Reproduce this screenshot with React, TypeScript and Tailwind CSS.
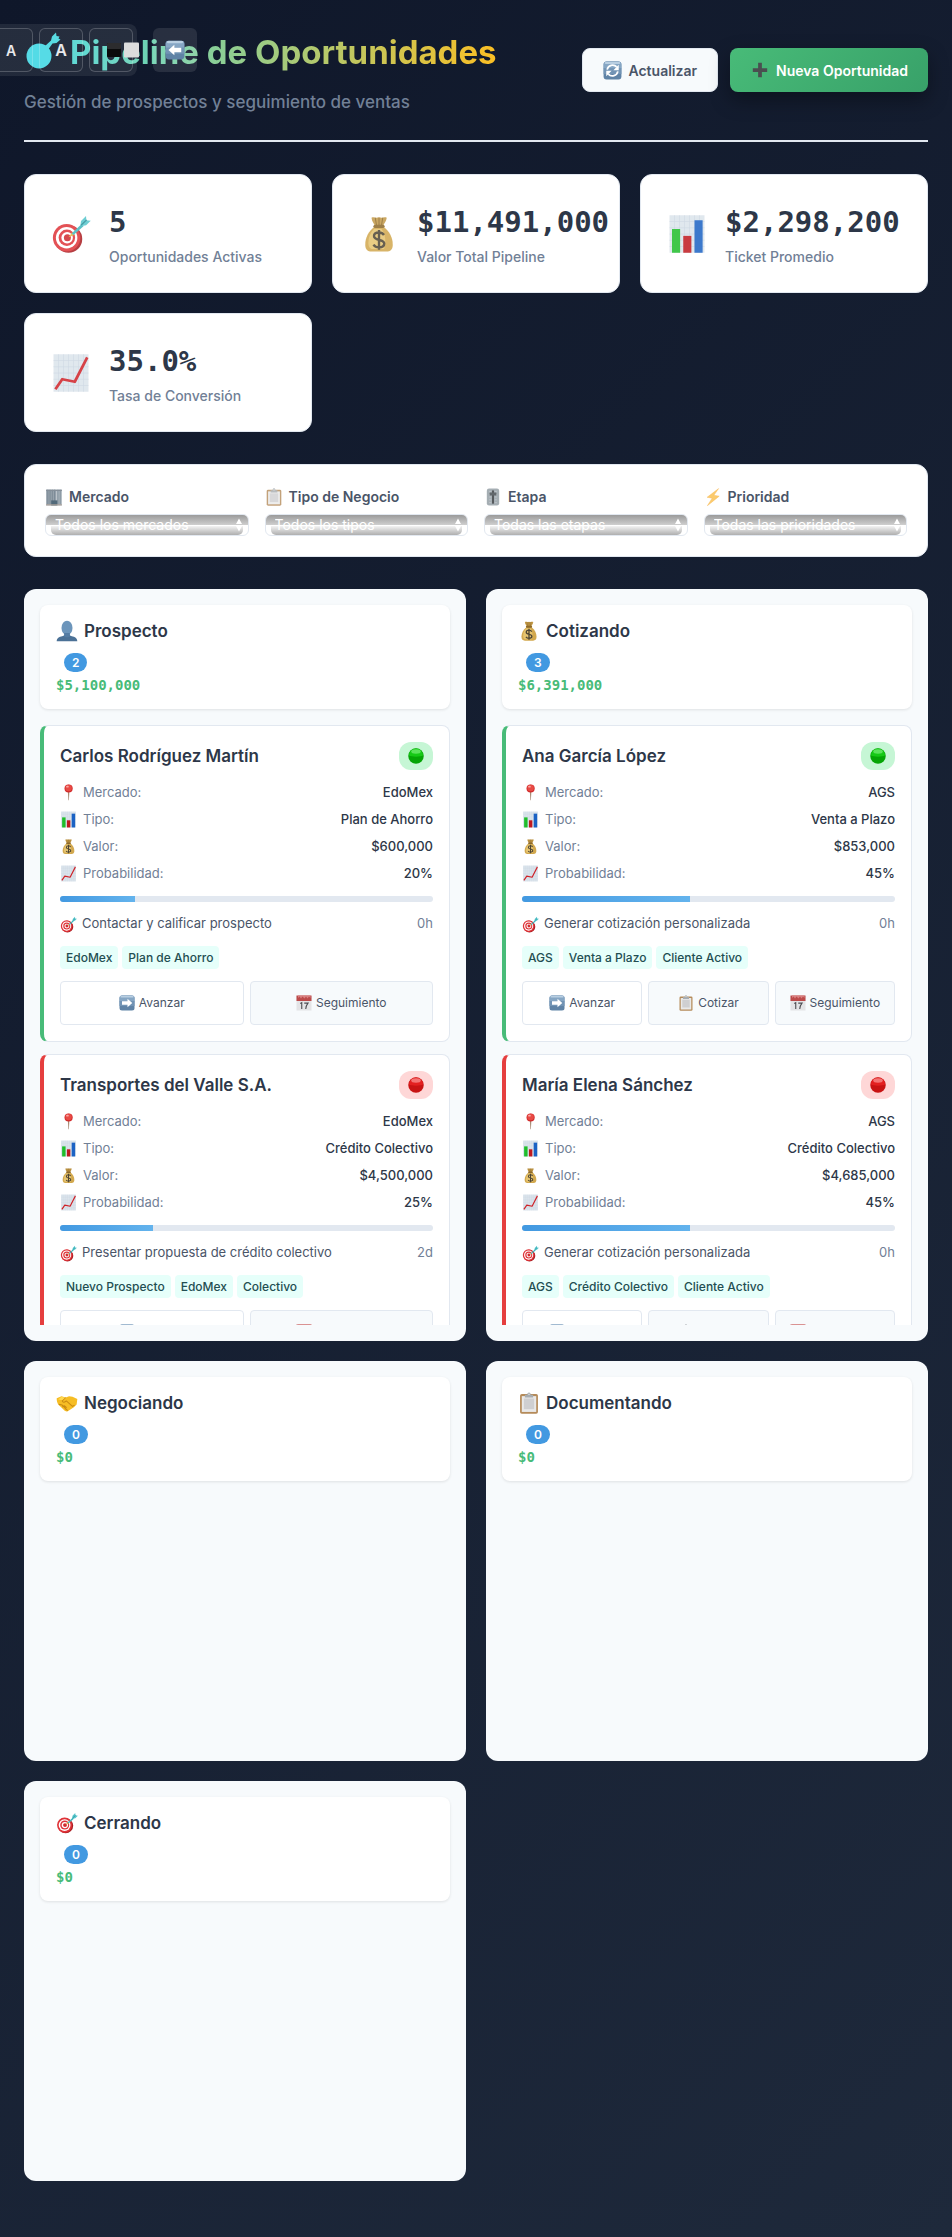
import React, { type ReactNode } from "react";

type IconName =
  | "target" | "bag" | "bars" | "trend" | "pin" | "building" | "clipboard" | "slider"
  | "bolt" | "person" | "handshake" | "right" | "left" | "calendar" | "refresh"
  | "green" | "red" | "plus";

const keycap = (
  <>
    <rect x="1" y="1" width="30" height="30" rx="5" fill="#5f83a6" />
    <rect x="1" y="1" width="30" height="15" rx="5" fill="#86a6c4" />
    <rect x="3" y="1.5" width="26" height="3.5" rx="1.7" fill="#b9cfe2" />
    <rect x="1" y="12" width="30" height="10" fill="#7294b5" />
  </>
);

const sheet = (
  <>
    <rect x="2" y="1" width="28" height="30" fill="#dbe4ec" />
    <path d="M6 1v30M10 1v30M14 1v30M18 1v30M22 1v30M26 1v30M2 6h28M2 11h28M2 16h28M2 21h28M2 26h28" stroke="#c9d4df" strokeWidth=".5" />
  </>
);

const ART: Record<IconName, ReactNode> = {
  target: (
    <>
      <circle cx="14" cy="20" r="11" fill="#a91d22" />
      <circle cx="12.5" cy="19" r="11" fill="#df3338" />
      <circle cx="12.5" cy="19" r="8.6" fill="#fff" />
      <circle cx="12.7" cy="19" r="6.6" fill="#df3338" />
      <circle cx="12.9" cy="19" r="4.6" fill="#fff" />
      <circle cx="13.1" cy="19" r="2.8" fill="#cf2a2f" />
      <path d="M14 18.5l3-4 2 2z" fill="#e8b33c" />
      <path d="M16.5 15.5l8-7.5 1.5 1.8-8 7z" fill="#3fb6bd" />
      <path d="M23.5 9.5l.5-4 4-4 .3 3.4 3.5.4-3.7 3.7-4 .7z" fill="#55c6cc" />
      <path d="M24 9l4.5-4.3" stroke="#268b95" strokeWidth="1" />
    </>
  ),
  bag: (
    <>
      <path d="M10 3c2-1 3 .6 6-.4 3 1 4-.6 6.200.4-.4 3-2 4.500-3 6.500h-6.400c-1-2-2.500-3.500-2.800-6.500z" fill="#c39a48" />
      <path d="M13 3l1 6M16 3v6M19 3l-1 6" stroke="#8d692a" strokeWidth=".8" />
      <path d="M12.500 10h7c5 4 7.500 9 7.500 14.500 0 4-2 5.500-5 5.500h-12c-3 0-5-1.500-5-5.500C5 19 7.500 14 12.500 10z" fill="#d2a84e" />
      <path d="M12 12c-3 3-4.500 7-4.500 11 0 3 1 5 3.500 5h9c2.500-8 0-13-2-16z" fill="#e6c46f" />
      <rect x="11.500" y="8.500" width="9" height="2.600" rx="1.300" fill="#8d692a" />
      <path d="M20 16.800c-1-1.500-2.400-2-4-2-2.300 0-4 1.100-4 2.900 0 4.200 8.200 2 8.200 6 0 1.900-1.700 3-4.200 3-1.900 0-3.500-.7-4.400-2.200M16 12.800v15.800" fill="none" stroke="#4d4433" strokeWidth="1.900" />
    </>
  ),
  bars: (
    <>
      {sheet}
      <rect x="4" y="12" width="6.500" height="19" fill="#1fbe2b" />
      <rect x="13" y="17.500" width="6.500" height="13.500" fill="#c01a1f" />
      <rect x="22" y="5" width="6.500" height="26" fill="#1b62c4" />
    </>
  ),
  trend: (
    <>
      {sheet}
      <path d="M3.500 29l5.500-8 10 2L29 3.500" fill="none" stroke="#cf2228" strokeWidth="2.200" strokeLinejoin="round" />
    </>
  ),
  pin: (
    <>
      <path d="M14.800 14h2.800l-.8 16.500h-1z" fill="#a98a74" />
      <circle cx="16.200" cy="8.500" r="7.700" fill="#d12a2a" />
      <circle cx="16.200" cy="7.500" r="6.200" fill="#e84a45" />
      <ellipse cx="14" cy="5" rx="2.600" ry="1.800" fill="#f8aaa5" />
    </>
  ),
  building: (
    <>
      <path d="M2 3h18v28H2z" fill="#7e8c98" />
      <path d="M20 3h10v28H20z" fill="#98a5af" />
      <path d="M5 3v26M9 3v26M13 3v26M17 3v26M23 3v26M27 3v26" stroke="#536777" strokeWidth="1.400" />
      <path d="M2 3h28v2.400H2z" fill="#677480" />
      <path d="M11 22h11v9H11z" fill="#28465a" />
      <path d="M2 29h28v2H2z" fill="#9b8c82" />
    </>
  ),
  clipboard: (
    <>
      <rect x="3" y="3" width="26" height="28.500" rx="2.500" fill="#b58b5a" />
      <rect x="5.500" y="6" width="21" height="23" fill="#e9e9e9" />
      <rect x="8.500" y="9.500" width="15" height="15.500" fill="#cfcfd1" />
      <path d="M10 4h3.500c0-4.500 5-4.500 5 0H22v4H10z" fill="#a7acb0" />
      <circle cx="16" cy="3.200" r="1.100" fill="#e9e9e9" />
    </>
  ),
  slider: (
    <>
      <rect x="5" y="1" width="22" height="30" rx="4" fill="#8f9aa1" />
      <path d="M9 6h4M9 11h4M9 16h4M9 21h4M9 26h4M19 6h4M19 11h4M19 16h4M19 21h4M19 26h4" stroke="#c4cbd0" strokeWidth="1" />
      <rect x="14.300" y="4" width="3.400" height="24" rx="1.500" fill="#272c30" />
      <rect x="10" y="8" width="12" height="5.500" rx="1.500" fill="#3c4348" />
    </>
  ),
  bolt: <path d="M26 1L5.500 16.500 14.500 18 6 31.500 27 14.500 17.500 13z" fill="#fbbf4b" stroke="#f3a62b" strokeWidth=".8" />,
  person: (
    <>
      <path d="M1 31c0-5 3.500-6.500 8-7.500 3-.6 4-1.500 4-3.500h6c0 2 1 2.900 4 3.500 4.500 1 8 2.500 8 7.500z" fill="#4b7196" />
      <ellipse cx="16" cy="11.500" rx="8" ry="10.500" fill="#6c95bb" />
      <path d="M12 19h8l.5 4.500c-2 2-7 2-9 0z" fill="#547ca3" />
    </>
  ),
  handshake: (
    <>
      <path d="M1 9l7-3 6 2 5-2 5 1 7 3-1 8-4 4-9 6c-2 .8-4-.3-5-1.500L4 19C1.500 16 1 12 1 9z" fill="#f6bd24" />
      <path d="M14 8l-5 5c1 3 4 2 6 0l9 8 3-2M4 18l5 1 8 8M9 22l3-2 3 2.500-2 2.500" fill="none" stroke="#c98a12" strokeWidth="1.500" strokeLinejoin="round" />
      <path d="M8 7l5 1.400-4 3.500-6-1z" fill="#ffd84f" />
    </>
  ),
  right: <>{keycap}<path d="M6 12.500h11V7.500l9.500 8.500-9.500 8.500v-5H6z" fill="#fff" /></>,
  left: <>{keycap}<path d="M26 12.500H15V7.500L5.500 16l9.500 8.500v-5h11z" fill="#fff" /></>,
  calendar: (
    <>
      <rect x="1" y="2" width="30" height="29" fill="#e4e4e6" />
      <rect x="1" y="1" width="30" height="11" fill="#bc4a4a" />
      <path d="M4 1v5l3-3 3 4 3-4 4 4 3-4 3 4 3-4 3 3V1z" fill="#d98282" />
      <path d="M8.500 17l3-1.500V28M16.500 16.300h7.500c-2.800 3.500-4.300 7-4.500 11.700" fill="none" stroke="#4d4d52" strokeWidth="2.200" />
    </>
  ),
  refresh: (
    <>
      {keycap}
      <path d="M7 14.500a9.300 9.300 0 0 1 16-4.500M25 17.500a9.300 9.300 0 0 1-16 4.500" fill="none" stroke="#fff" strokeWidth="2.900" />
      <path d="M26.500 6.500v9h-9zM5.500 25.500v-9h9z" fill="#fff" />
    </>
  ),
  green: (
    <>
      <circle cx="16" cy="16" r="15.500" fill="#05a505" />
      <path d="M2 15a14 14 0 0 1 28 0c-5 3-23 3-28 0z" fill="#16c916" />
      <ellipse cx="16" cy="7" rx="9.500" ry="4.500" fill="#5be35b" />
    </>
  ),
  red: (
    <>
      <circle cx="16" cy="16" r="15.500" fill="#c81313" />
      <path d="M2 15a14 14 0 0 1 28 0c-5 3-23 3-28 0z" fill="#e32020" />
      <ellipse cx="16" cy="7" rx="9.500" ry="4.500" fill="#f37474" />
    </>
  ),
  plus: <path d="M13 4.500h6V13h8.500v6H19v8.500h-6V19H4.500v-6H13z" fill="#4a4f50" />,
};

function Icon({ name, className }: { name: IconName; className: string }) {
  return (
    <svg viewBox="0 0 32 32" aria-hidden="true" className={`shrink-0 ${className}`}>
      {ART[name]}
    </svg>
  );
}

const STATS: { icon: IconName; value: string; label: string }[] = [
  { icon: "target", value: "5", label: "Oportunidades Activas" },
  { icon: "bag", value: "$11,491,000", label: "Valor Total Pipeline" },
  { icon: "bars", value: "$2,298,200", label: "Ticket Promedio" },
  { icon: "trend", value: "35.0%", label: "Tasa de Conversión" },
];

const FILTERS: { id: string; icon: IconName; label: string; all: string }[] = [
  { id: "mercado", icon: "building", label: "Mercado", all: "Todos los mercados" },
  { id: "tipo", icon: "clipboard", label: "Tipo de Negocio", all: "Todos los tipos" },
  { id: "etapa", icon: "slider", label: "Etapa", all: "Todas las etapas" },
  { id: "prioridad", icon: "bolt", label: "Prioridad", all: "Todas las prioridades" },
];

interface Deal {
  name: string;
  urgent: boolean;
  market: string;
  type: string;
  value: string;
  probability: number;
  next: string;
  elapsed: string;
  tags: string[];
  quote: boolean;
}

const STAGES: { icon: IconName; name: string; count: number; total: string; deals: Deal[] }[] = [
  {
    icon: "person", name: "Prospecto", count: 2, total: "$5,100,000",
    deals: [
      { name: "Carlos Rodríguez Martín", urgent: false, market: "EdoMex", type: "Plan de Ahorro", value: "$600,000", probability: 20, next: "Contactar y calificar prospecto", elapsed: "0h", tags: ["EdoMex", "Plan de Ahorro"], quote: false },
      { name: "Transportes del Valle S.A.", urgent: true, market: "EdoMex", type: "Crédito Colectivo", value: "$4,500,000", probability: 25, next: "Presentar propuesta de crédito colectivo", elapsed: "2d", tags: ["Nuevo Prospecto", "EdoMex", "Colectivo"], quote: false },
    ],
  },
  {
    icon: "bag", name: "Cotizando", count: 3, total: "$6,391,000",
    deals: [
      { name: "Ana García López", urgent: false, market: "AGS", type: "Venta a Plazo", value: "$853,000", probability: 45, next: "Generar cotización personalizada", elapsed: "0h", tags: ["AGS", "Venta a Plazo", "Cliente Activo"], quote: true },
      { name: "María Elena Sánchez", urgent: true, market: "AGS", type: "Crédito Colectivo", value: "$4,685,000", probability: 45, next: "Generar cotización personalizada", elapsed: "0h", tags: ["AGS", "Crédito Colectivo", "Cliente Activo"], quote: true },
    ],
  },
  { icon: "handshake", name: "Negociando", count: 0, total: "$0", deals: [] },
  { icon: "clipboard", name: "Documentando", count: 0, total: "$0", deals: [] },
  { icon: "target", name: "Cerrando", count: 0, total: "$0", deals: [] },
];

function AccessibilityBar() {
  const button = "flex size-11 shrink-0 items-center justify-center rounded-md border border-white/20 bg-white/2 font-semibold text-white/90";
  return (
    <div className="absolute top-6 -left-[15px] z-10 flex items-center gap-4">
      <div className="flex gap-[6px] rounded-lg bg-white/8 p-1">
        <button type="button" className={`${button} text-[14px]`}>A</button>
        <button type="button" className={`${button} text-[16px]`}>A</button>
        <button type="button" aria-label="Contraste" className={`${button} pl-6`}>
          <svg viewBox="0 0 32 16" className="h-4 w-8 shrink-0">
            <rect x="0" y="1" width="14" height="14" rx="1" fill="#0b0b0c" />
            <rect x="0" y="1" width="14" height="6" rx="1" fill="#2c2c2e" />
            <rect x="17" y="0.500" width="15" height="15" rx="1" fill="#dcdcdd" />
          </svg>
        </button>
      </div>
      <button type="button" aria-label="Volver" className="flex size-11 items-center justify-center rounded-md bg-white/10">
        <Icon name="left" className="size-5" />
      </button>
    </div>
  );
}

function Filter({ id, icon, label, all }: (typeof FILTERS)[number]) {
  return (
    <div className="flex flex-col gap-[6px]">
      <label htmlFor={id} className="flex h-[23px] items-center gap-[6px] text-[14px] font-semibold text-[#4a5568]">
        <Icon name={icon} className="size-[18px] opacity-80" />
        {label}
      </label>
      <div className="relative h-[22px] overflow-hidden rounded-md border border-[#e2e8f0] bg-white">
        <div className="h-[10px] bg-linear-to-b from-[#9b9b9b] to-[#cfcfcf]" />
        <div className="mx-[5px] mt-px h-[9px] rounded-b-[5px] bg-linear-to-b from-[#f4f4f4] to-[#afafaf]" />
        <select id={id} className="absolute inset-0 h-full w-full appearance-none bg-transparent px-[9px] text-[14px] leading-5 text-white outline-none">
          <option>{all}</option>
        </select>
        <svg viewBox="0 0 8 14" aria-hidden="true" className="pointer-events-none absolute top-[3px] right-[5px] h-[14px] w-2">
          <path d="M4 .5L7 6H1zM4 13.500L7 8H1z" fill="#fff" />
        </svg>
      </div>
    </div>
  );
}

function Field({ icon, label, value }: { icon: IconName; label: string; value: string }) {
  return (
    <div className="flex h-[21px] items-center justify-between text-[13px]">
      <dt className="flex items-center gap-[6px] text-[#718096]">
        <Icon name={icon} className="size-[17px]" />
        {label}
      </dt>
      <dd className="font-medium text-[#2d3748]">{value}</dd>
    </div>
  );
}

function DealAction({ icon, label, plain }: { icon: IconName; label: string; plain?: boolean }) {
  return (
    <button
      type="button"
      className={`flex h-11 min-w-0 flex-1 basis-0 items-center justify-center gap-1 rounded border border-[#e2e8f0] text-[12px] text-[#4a5568] ${plain ? "bg-white" : "bg-[#f7fafc]"}`}
    >
      <Icon name={icon} className="size-4" />
      {label}
    </button>
  );
}

function DealCard({ deal }: { deal: Deal }) {
  return (
    <article className={`shrink-0 rounded-lg border border-l-4 border-[#e2e8f0] bg-white p-4 ${deal.urgent ? "border-l-[#e53e3e]" : "border-l-[#48bb78]"}`}>
      <div className="flex items-center justify-between">
        <h4 className="text-[17px] leading-7 font-semibold text-[#2d3748]">{deal.name}</h4>
        <span className={`flex h-7 w-[34px] items-center justify-center rounded-xl ${deal.urgent ? "bg-[#fed7d7]" : "bg-[#c6f6d5]"}`}>
          <Icon name={deal.urgent ? "red" : "green"} className="size-4" />
        </span>
      </div>
      <dl className="mt-3 flex flex-col gap-[6px]">
        <Field icon="pin" label="Mercado:" value={deal.market} />
        <Field icon="bars" label="Tipo:" value={deal.type} />
        <Field icon="bag" label="Valor:" value={deal.value} />
        <Field icon="trend" label="Probabilidad:" value={`${deal.probability}%`} />
      </dl>
      <div className="mt-3 h-[6px] overflow-hidden rounded-[3px] bg-[#e2e8f0]">
        <div className="h-full bg-linear-to-r from-[#4299e1] to-[#63b3ed]" style={{ width: `${deal.probability}%` }} />
      </div>
      <div className="mt-3 flex h-5 items-center justify-between text-[13px]">
        <span className="flex items-center gap-[5px] text-[#4a5568]">
          <Icon name="target" className="size-[17px]" />
          {deal.next}
        </span>
        <span className="text-[#718096]">{deal.elapsed}</span>
      </div>
      <div className="mt-3 flex gap-1">
        {deal.tags.map((tag) => (
          <span key={tag} className="rounded bg-[#e6fffa] px-[6px] text-[12px] leading-[23px] font-medium text-[#234e52]">{tag}</span>
        ))}
      </div>
      <div className="mt-3 flex gap-[6px]">
        <DealAction icon="right" label="Avanzar" plain />
        {deal.quote && <DealAction icon="clipboard" label="Cotizar" />}
        <DealAction icon="calendar" label="Seguimiento" />
      </div>
    </article>
  );
}

export default function App() {
  return (
    <div className="relative min-h-screen overflow-hidden bg-[linear-gradient(135deg,#0f172a_0%,#1e293b_100%)] px-6 pt-6 pb-14 font-['Inter',sans-serif]">
      <AccessibilityBar />

      <header className="flex flex-wrap items-center justify-between border-b-2 border-[#e2e8f0] pb-6">
        <div>
          <h1 className="flex items-center gap-[6px] text-[33px] leading-[56px] font-bold">
            <svg viewBox="0 0 40 40" aria-hidden="true" className="size-10 shrink-0">
              <circle cx="15" cy="24" r="12.500" fill="#45d8e4" />
              <path d="M20 15l7-6.500 1-4 4-4 .5 3.500 3 .5-1 2 2 1-4 3.500-4 .5-5 7z" fill="#47d8e0" />
            </svg>
            <span className="bg-[linear-gradient(90deg,#4fd6d2_0%,#fbbf24_100%)] bg-clip-text text-transparent">Pipeline de Oportunidades</span>
          </h1>
          <p className="mt-2 text-[17px] leading-7 font-medium text-[#718096]">Gestión de prospectos y seguimiento de ventas</p>
        </div>
        <div className="flex gap-3">
          <button type="button" className="flex h-11 items-center gap-[6px] rounded-lg border border-[#e2e8f0] bg-[#f7fafc] px-5 text-[14px] font-semibold text-[#4a5568]">
            <Icon name="refresh" className="size-[19px]" />
            Actualizar
          </button>
          <button type="button" className="flex h-11 items-center gap-[6px] rounded-lg bg-[linear-gradient(135deg,#48bb78,#38a169)] px-5 text-[14px] font-semibold text-white shadow-[0_8px_20px_rgba(0,0,0,0.35)]">
            <Icon name="plus" className="size-5" />
            Nueva Oportunidad
          </button>
        </div>
      </header>

      <section className="mt-8 grid grid-cols-[repeat(auto-fit,minmax(250px,1fr))] gap-5">
        {STATS.map((stat) => (
          <div key={stat.label} className="flex items-center gap-4 rounded-xl border border-[#e2e8f0] bg-white px-6 py-6">
            <span className="flex w-11 shrink-0 justify-center">
              <Icon name={stat.icon} className="size-10 opacity-85" />
            </span>
            <div className="min-w-0">
              <div className="font-['DejaVu_Sans_Mono',monospace] text-[29px] leading-[46px] font-bold text-[#2d3748]">{stat.value}</div>
              <div className="text-[14px] leading-[23px] font-medium text-[#718096]">{stat.label}</div>
            </div>
          </div>
        ))}
      </section>

      <section className="mt-8 grid grid-cols-[repeat(auto-fit,minmax(200px,1fr))] gap-4 rounded-xl border border-[#e2e8f0] bg-white p-5">
        {FILTERS.map((filter) => (
          <Filter key={filter.id} {...filter} />
        ))}
      </section>

      <main className="mt-8 grid grid-cols-[repeat(auto-fit,minmax(350px,1fr))] gap-5">
        {STAGES.map((stage) => (
          <section key={stage.name} className="min-h-[400px] rounded-xl bg-[#f7fafc] p-4">
            <div className="flex flex-col items-start rounded-lg bg-white px-4 py-3 shadow-[0_1px_3px_rgba(0,0,0,0.1)]">
              <h3 className="flex items-center gap-[6px] text-[17px] leading-7 font-semibold text-[#2d3748]">
                <Icon name={stage.icon} className="size-[22px]" />
                {stage.name}
              </h3>
              <span className="mt-2 ml-2 rounded-[10px] bg-[#4299e1] px-2 text-[12px] leading-[19px] font-semibold text-white">{stage.count}</span>
              <span className="mt-px font-['DejaVu_Sans_Mono',monospace] text-[14px] leading-6 font-bold text-[#48bb78]">{stage.total}</span>
            </div>
            {stage.deals.length > 0 && (
              <div className="mt-4 flex max-h-[600px] flex-col gap-3 overflow-y-auto [scrollbar-width:none]">
                {stage.deals.map((deal) => (
                  <DealCard key={deal.name} deal={deal} />
                ))}
              </div>
            )}
          </section>
        ))}
      </main>
    </div>
  );
}
